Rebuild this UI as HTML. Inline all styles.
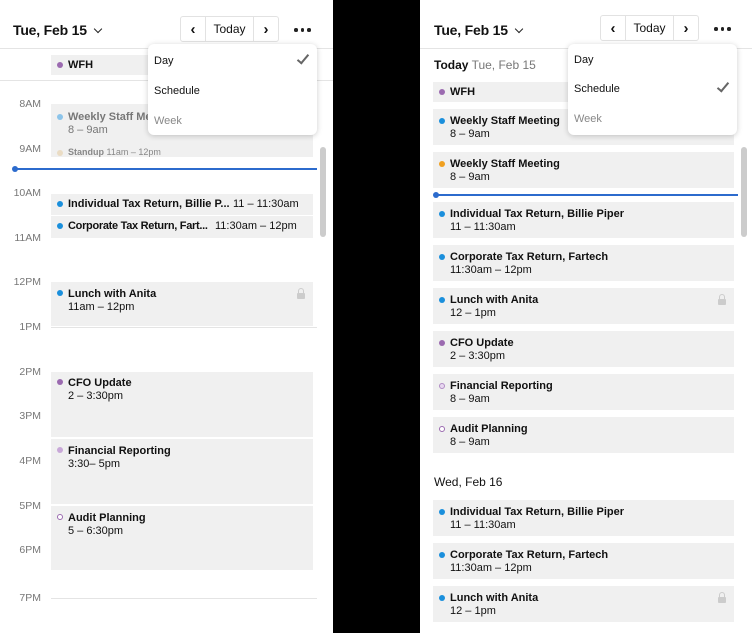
<!DOCTYPE html>
<html><head><meta charset="utf-8"><style>
*{margin:0;padding:0;box-sizing:border-box}
body{width:752px;height:633px;overflow:hidden;background:#000;font-family:"Liberation Sans",sans-serif;color:#111;position:relative}
.p{position:absolute;top:0;height:633px;background:#fff;overflow:hidden}
.a{position:absolute}
.title{font-size:14px;font-weight:bold;letter-spacing:-0.2px}
.chev{display:inline-block;width:6px;height:6px;border-right:1.6px solid #222;border-bottom:1.6px solid #222;transform:rotate(45deg);margin-left:8px;position:relative;top:-3px}
.btns{position:absolute;top:16px;height:26px;width:99px;border:1px solid #e2e2e2;border-radius:3px;display:flex;font-size:12px;background:#fff}
.btns div{display:flex;align-items:center;justify-content:center}
.btns .s{width:24px;font-weight:bold;font-size:15px}
.btns .m{flex:1;border-left:1px solid #e2e2e2;border-right:1px solid #e2e2e2}
.dots{position:absolute;top:28px;display:flex;gap:3px}
.dots i{width:3.5px;height:3.5px;background:#222;border-radius:50%}
.hr{position:absolute;height:1px;background:#e4e4e4}
.ev{position:absolute;background:#f0f0f0;font-size:11px;padding-left:17px;line-height:13px}
.ev b{display:block;font-size:11px}
.dot{position:absolute;left:6px;width:6px;height:6px;border-radius:50%}
.lbl{position:absolute;left:0;width:41px;text-align:right;font-size:10.5px;color:#777}
.menu{position:absolute;width:169px;height:91px;background:#fff;border-radius:6px;box-shadow:0 1px 6px rgba(0,0,0,.2);font-size:11px}
.menu div{position:absolute;left:6px}
.chk{position:absolute;right:11px;width:6px;height:12px;border-right:2px solid #666;border-bottom:2px solid #666;transform:rotate(40deg)}
.lock{position:absolute;width:8px;height:6px;background:#ccc;border-radius:1px}
.lock:before{content:"";position:absolute;left:1px;top:-5px;width:4px;height:5px;border:1.5px solid #ccc;border-bottom:none;border-radius:3px 3px 0 0}
.scr{position:absolute;width:6px;height:90px;background:#ccc;border-radius:3px;top:147px}
</style></head><body>

<div class="p" style="left:0;width:333px">
  <div class="a title" style="left:13px;top:22px">Tue, Feb 15<span class="chev"></span></div>
  <div class="btns" style="left:180px"><div class="s">‹</div><div class="m">Today</div><div class="s">›</div></div>
  <div class="dots" style="left:294px"><i></i><i></i><i></i></div>
  <div class="hr" style="left:0;width:333px;top:48px"></div>
  <div class="ev" style="left:51px;top:55px;width:120px;height:20px;padding-top:4px"><span class="dot" style="top:7px;background:#9b6ab0"></span><b>WFH</b></div>
  <div class="hr" style="left:0;width:333px;top:80px"></div>

  <div class="lbl" style="top:98px">8AM</div>
  <div class="lbl" style="top:143px">9AM</div>
  <div class="lbl" style="top:187px">10AM</div>
  <div class="lbl" style="top:232px">11AM</div>
  <div class="lbl" style="top:276px">12PM</div>
  <div class="lbl" style="top:321px">1PM</div>
  <div class="lbl" style="top:366px">2PM</div>
  <div class="lbl" style="top:410px">3PM</div>
  <div class="lbl" style="top:455px">4PM</div>
  <div class="lbl" style="top:500px">5PM</div>
  <div class="lbl" style="top:544px">6PM</div>
  <div class="lbl" style="top:592px">7PM</div>
  <div class="hr" style="left:51px;width:266px;top:327px"></div>
  <div class="hr" style="left:51px;width:266px;top:598px"></div>

  <div class="ev" style="left:51px;top:104px;width:262px;height:43px;padding-top:7px;color:#777"><span class="dot" style="top:10px;background:#8cc4ea"></span><b>Weekly Staff Meeting</b>8 – 9am</div>
  <div class="ev" style="left:51px;top:147px;width:262px;height:10px;font-size:9px;line-height:11px;color:#888"><span class="dot" style="top:3px;background:#eadcc4"></span><b style="display:inline;font-size:9px">Standup</b> 11am – 12pm</div>
  <div class="a" style="left:15px;top:168px;width:302px;height:2px;background:#2c6bcd"></div>
  <div class="a" style="left:12px;top:166px;width:6px;height:6px;border-radius:50%;background:#2c6bcd"></div>

  <div class="ev" style="left:51px;top:194px;width:262px;height:21px;padding-top:4px"><span class="dot" style="top:7px;background:#1a8fdc"></span><b style="display:inline">Individual Tax Return, Billie P...</b><span style="position:absolute;left:182px;top:4px">11 – 11:30am</span></div>
  <div class="ev" style="left:51px;top:216px;width:262px;height:22px;padding-top:4px"><span class="dot" style="top:7px;background:#1a8fdc"></span><b style="display:inline;letter-spacing:-0.3px">Corporate Tax Return, Fart...</b><span style="position:absolute;left:164px;top:4px">11:30am – 12pm</span></div>
  <div class="ev" style="left:51px;top:282px;width:262px;height:44px;padding-top:6px"><span class="dot" style="top:8px;background:#1a8fdc"></span><b>Lunch with Anita</b>11am – 12pm<span class="lock" style="left:246px;top:11px"></span></div>
  <div class="ev" style="left:51px;top:372px;width:262px;height:65px;padding-top:5px"><span class="dot" style="top:7px;background:#9b6ab0"></span><b>CFO Update</b>2 – 3:30pm</div>
  <div class="ev" style="left:51px;top:439px;width:262px;height:65px;padding-top:6px"><span class="dot" style="top:8px;background:#c8a8d8"></span><b>Financial Reporting</b>3:30– 5pm</div>
  <div class="ev" style="left:51px;top:506px;width:262px;height:64px;padding-top:6px"><span class="dot" style="top:8px;border:1px solid #9b6ab0;background:#fff"></span><b>Audit Planning</b>5 – 6:30pm</div>
  <div class="scr" style="left:320px"></div>

  <div class="menu" style="left:148px;top:44px">
    <div style="top:11px">Day</div><span class="chk" style="top:8px"></span>
    <div style="top:41px">Schedule</div>
    <div style="top:71px;color:#888">Week</div>
  </div>
</div>

<div class="p" style="left:420px;width:332px">
  <div class="a title" style="left:14px;top:22px">Tue, Feb 15<span class="chev"></span></div>
  <div class="btns" style="left:180px;top:15px"><div class="s">‹</div><div class="m">Today</div><div class="s">›</div></div>
  <div class="dots" style="left:294px;top:27px"><i></i><i></i><i></i></div>
  <div class="hr" style="left:0;width:332px;top:48px"></div>
  <div class="a" style="left:14px;top:58px;font-size:12px"><b>Today</b> <span style="color:#777">Tue, Feb 15</span></div>

  <div class="ev" style="left:13px;top:82px;width:301px;height:20px;padding-top:4px"><span class="dot" style="top:7px;background:#9b6ab0"></span><b>WFH</b></div>
  <div class="ev" style="left:13px;top:109px;width:301px;height:36px;padding-top:6px"><span class="dot" style="top:9px;background:#1a8fdc"></span><b>Weekly Staff Meeting</b>8 – 9am</div>
  <div class="ev" style="left:13px;top:152px;width:301px;height:36px;padding-top:6px"><span class="dot" style="top:9px;background:#f0a020"></span><b>Weekly Staff Meeting</b>8 – 9am</div>
  <div class="a" style="left:16px;top:194px;width:302px;height:2px;background:#2c6bcd"></div>
  <div class="a" style="left:13px;top:192px;width:6px;height:6px;border-radius:50%;background:#2c6bcd"></div>
  <div class="ev" style="left:13px;top:202px;width:301px;height:36px;padding-top:6px"><span class="dot" style="top:9px;background:#1a8fdc"></span><b>Individual Tax Return, Billie Piper</b>11 – 11:30am</div>
  <div class="ev" style="left:13px;top:245px;width:301px;height:36px;padding-top:6px"><span class="dot" style="top:9px;background:#1a8fdc"></span><b>Corporate Tax Return, Fartech</b>11:30am – 12pm</div>
  <div class="ev" style="left:13px;top:288px;width:301px;height:36px;padding-top:6px"><span class="dot" style="top:9px;background:#1a8fdc"></span><b>Lunch with Anita</b>12 – 1pm<span class="lock" style="left:285px;top:11px"></span></div>
  <div class="ev" style="left:13px;top:331px;width:301px;height:36px;padding-top:6px"><span class="dot" style="top:9px;background:#9b6ab0"></span><b>CFO Update</b>2 – 3:30pm</div>
  <div class="ev" style="left:13px;top:374px;width:301px;height:36px;padding-top:6px"><span class="dot" style="top:9px;border:1px solid #b08cc4;background:#e8d8f0"></span><b>Financial Reporting</b>8 – 9am</div>
  <div class="ev" style="left:13px;top:417px;width:301px;height:36px;padding-top:6px"><span class="dot" style="top:9px;border:1px solid #9b6ab0;background:#fff"></span><b>Audit Planning</b>8 – 9am</div>
  <div class="a" style="left:14px;top:475px;font-size:12px">Wed, Feb 16</div>
  <div class="ev" style="left:13px;top:500px;width:301px;height:36px;padding-top:6px"><span class="dot" style="top:9px;background:#1a8fdc"></span><b>Individual Tax Return, Billie Piper</b>11 – 11:30am</div>
  <div class="ev" style="left:13px;top:543px;width:301px;height:36px;padding-top:6px"><span class="dot" style="top:9px;background:#1a8fdc"></span><b>Corporate Tax Return, Fartech</b>11:30am – 12pm</div>
  <div class="ev" style="left:13px;top:586px;width:301px;height:36px;padding-top:6px"><span class="dot" style="top:9px;background:#1a8fdc"></span><b>Lunch with Anita</b>12 – 1pm<span class="lock" style="left:285px;top:11px"></span></div>
  <div class="scr" style="left:321px"></div>

  <div class="menu" style="left:148px;top:44px">
    <div style="top:10px">Day</div>
    <div style="top:39px">Schedule</div><span class="chk" style="top:36px"></span>
    <div style="top:69px;color:#888">Week</div>
  </div>
</div>
</body></html>
